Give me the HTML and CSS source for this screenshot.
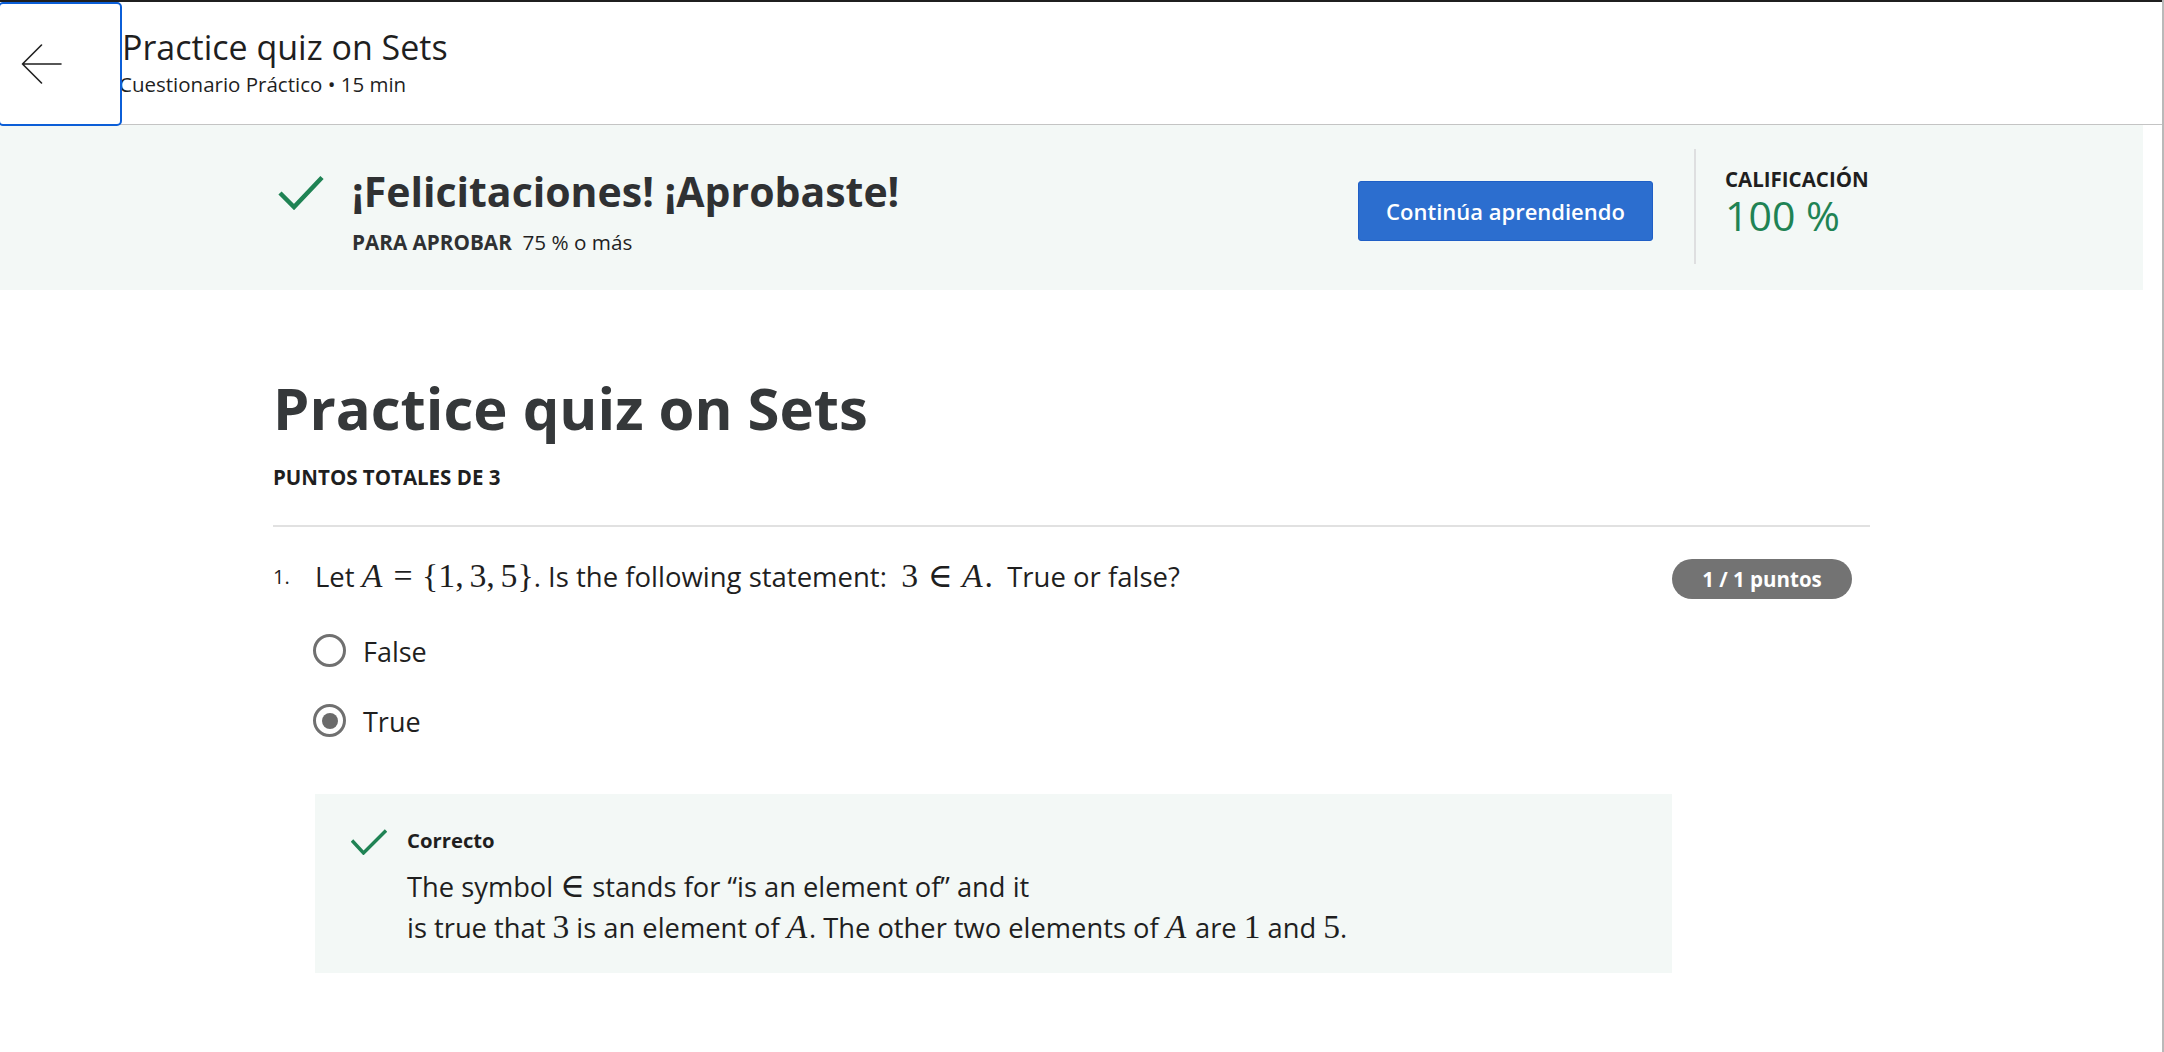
FILE: index.html
```html
<!DOCTYPE html>
<html lang="es">
<head>
<meta charset="utf-8">
<title>Practice quiz on Sets</title>
<link rel="stylesheet" href="styles.css">
</head>
<body>
<div class="app">
  <header class="topbar">
    <button class="back" aria-label="Volver">
      <svg width="41" height="40" viewBox="0 0 41 40" fill="none" stroke="#1f1f1f" stroke-width="1.6" stroke-linecap="round" stroke-linejoin="round">
        <path d="M40 20 H1.5 M20.5 1 L1.5 20 L20.5 39"/>
      </svg>
    </button>
    <div class="topbar-text">
      <div class="topbar-title">Practice quiz on Sets</div>
      <div class="topbar-sub">Cuestionario Práctico • 15 min</div>
    </div>
  </header>

  <section class="result-band">
    <div class="band-inner">
      <svg class="band-check" width="46" height="35" viewBox="0 0 46 35" fill="none" stroke="#1f8354" stroke-width="4.5" stroke-linecap="butt" stroke-linejoin="miter">
        <path d="M2 18 L16 32 L44 2.5"/>
      </svg>
      <div class="band-text">
        <h2 class="band-title">¡Felicitaciones! ¡Aprobaste!</h2>
        <p class="band-pass"><strong>PARA APROBAR</strong>&nbsp; 75 % o más</p>
      </div>
      <button class="continue">Continúa aprendiendo</button>
      <div class="band-divider"></div>
      <div class="grade">
        <div class="grade-label">CALIFICACIÓN</div>
        <div class="grade-value">100 %</div>
      </div>
    </div>
  </section>

  <div class="page">
    <main class="content">
      <h1 class="quiz-title">Practice quiz on Sets</h1>
      <div class="points-total">PUNTOS TOTALES DE 3</div>
      <hr class="rule">

      <div class="question">
        <div class="q-num">1.</div>
        <div class="q-body">
          <div class="q-text">Let <span class="math"><span class="mi">A</span><span class="mo rel">=</span><span class="mo">{</span><span class="mn">1</span><span class="mo punct">,</span><span class="mn">3</span><span class="mo punct">,</span><span class="mn">5</span><span class="mo">}</span></span>. Is the following statement: &nbsp;<span class="math"><span class="mn">3</span><span class="mo rel">∈</span><span class="mi">A</span><span class="mo">.</span></span>&nbsp; True or false?</div>

          <div class="options">
            <label class="option">
              <span class="radio"></span>
              <span class="option-label">False</span>
            </label>
            <label class="option">
              <span class="radio checked"></span>
              <span class="option-label">True</span>
            </label>
          </div>

          <div class="feedback">
            <svg class="fb-check" width="36" height="26" viewBox="0 0 36 26" fill="none" stroke="#1f8354" stroke-width="3.4" stroke-linecap="butt" stroke-linejoin="miter">
              <path d="M1 11.5 L12.5 24 L35 1.5"/>
            </svg>
            <div class="fb-text">
              <div class="fb-title">Correcto</div>
              <div class="fb-body">The symbol <span class="math"><span class="mo">∈</span></span> stands for “is an element of” and it<br>is true that <span class="math"><span class="mn">3</span></span> is an element of <span class="math"><span class="mi">A</span></span>. The other two elements of <span class="math"><span class="mi">A</span></span> are <span class="math"><span class="mn">1</span></span> and <span class="math"><span class="mn">5</span></span>.</div>
            </div>
          </div>
        </div>
        <div class="q-points"><span class="badge">1 / 1 puntos</span></div>
      </div>
    </main>
  </div>
</div>
</body>
</html>
```

FILE: styles.css
```css
* { box-sizing: border-box; }

html, body {
  margin: 0;
  padding: 0;
  background: #ffffff;
}

body {
  font-family: "Open Sans", "Noto Sans", "Liberation Sans", sans-serif;
  color: #1f1f1f;
}

.app {
  width: 2164px;
  min-height: 1052px;
  border-right: 2px solid #b9b9b9;
}

/* ---------- top bar ---------- */
.topbar {
  display: flex;
  align-items: stretch;
  height: 125px;
  border-top: 2px solid #1f1f1f;
  border-bottom: 1px solid #c4c4c4;
}

.back {
  position: relative;
  z-index: 2;
  flex: 0 0 auto;
  width: 124px;
  height: 124px;
  margin-left: -2px;
  padding: 0 0 0 2px;
  background: #ffffff;
  border: 2px solid #0b5ed7;
  border-radius: 5px;
  display: flex;
  align-items: center;
  justify-content: center;
  cursor: pointer;
}

.back svg { margin-left: -39px; margin-top: -1px; }

.topbar-text {
  margin-left: 0;
  padding-top: 24px;
}

.topbar-title {
  font-size: 34px;
  line-height: 42px;
  color: #1f1f1f;
}

.topbar-sub {
  margin-top: 2px;
  margin-left: -3px;
  font-size: 20.5px;
  line-height: 28px;
  color: #1f1f1f;
}

/* ---------- result band ---------- */
.result-band {
  margin-right: 19px;
  height: 165px;
  background: #f3f8f6;
}

.band-inner {
  width: 1597px;
  margin: 0 auto;
  height: 100%;
  display: flex;
  align-items: flex-start;
}

.band-check {
  flex: 0 0 auto;
  margin-left: 5px;
  margin-top: 50px;
}

.band-text {
  flex: 1 1 auto;
  margin-left: 28px;
  padding-top: 42px;
}

.band-title {
  margin: 0;
  font-size: 41px;
  line-height: 48px;
  font-weight: 700;
  color: #2f3133;
}

.band-pass {
  margin: 15px 0 0;
  font-size: 20.7px;
  line-height: 24px;
  color: #1f1f1f;
}

.band-pass strong {
  font-weight: 700;
  color: #2f3133;
}

.continue {
  flex: 0 0 auto;
  margin-top: 56px;
  width: 295px;
  height: 60px;
  background: #2c6ecf;
  border: 1px solid #1f5fc6;
  border-radius: 3px;
  color: #ffffff;
  font-family: "Open Sans", "Noto Sans", sans-serif;
  font-size: 22px;
  font-weight: 600;
  padding: 0;
  cursor: pointer;
}

.band-divider {
  flex: 0 0 auto;
  margin-left: 41px;
  margin-top: 24px;
  width: 2px;
  height: 115px;
  background: #dedfe0;
}

.grade {
  flex: 0 0 auto;
  margin-left: 29px;
  width: 145px;
  padding-top: 40px;
}

.grade-label {
  font-size: 20.5px;
  line-height: 28px;
  font-weight: 700;
  color: #1f1f1f;
  white-space: nowrap;
}

.grade-value {
  font-size: 41px;
  line-height: 44px;
  color: #1f8354;
}

/* ---------- main content ---------- */
.page {
  margin-right: 19px;
}

.content {
  width: 1597px;
  margin: 0 auto;
}

.quiz-title {
  margin: 83px 0 0;
  font-size: 58px;
  line-height: 70px;
  font-weight: 700;
  color: #35383a;
}

.points-total {
  margin-top: 22px;
  font-size: 20.5px;
  line-height: 24px;
  font-weight: 700;
  color: #1f1f1f;
}

.rule {
  margin: 36px 0 0;
  height: 0;
  border: 0;
  border-top: 2px solid #e1e1e1;
}

.question {
  display: flex;
  align-items: flex-start;
  margin-top: 32px;
}

.q-num {
  flex: 0 0 42px;
  font-size: 20px;
  line-height: 36px;
  color: #1f1f1f;
}

.q-body {
  flex: 0 0 1357px;
}

.q-text {
  font-size: 27.5px;
  line-height: 36px;
  color: #1f1f1f;
}

.math {
  font-family: "Liberation Serif", "DejaVu Serif", serif;
  font-size: 1.23em;
  line-height: 0;
  white-space: nowrap;
}

.mi { font-style: italic; margin-right: 0.05em; }
.mo.rel { margin: 0 0.28em; }
.mo.punct { margin-right: 0.17em; }

.options {
  margin-top: 40px;
  margin-left: -2px;
  display: flex;
  flex-direction: column;
  gap: 36px;
}

.option {
  display: flex;
  align-items: flex-start;
  height: 34px;
  cursor: pointer;
}

.radio {
  flex: 0 0 auto;
  width: 33px;
  height: 33px;
  margin-top: -1px;
  border: 3px solid #707070;
  border-radius: 50%;
  background: #ffffff;
  position: relative;
}

.radio.checked::after {
  content: "";
  position: absolute;
  left: 5.5px;
  top: 5.5px;
  width: 16px;
  height: 16px;
  border-radius: 50%;
  background: #6b6b6b;
}

.option-label {
  margin-left: 17px;
  font-size: 27px;
  line-height: 34px;
  color: #1f1f1f;
}

.feedback {
  margin-top: 55px;
  width: 1357px;
  background: #f3f8f6;
  padding: 33px 0 25px 36px;
  display: flex;
  align-items: flex-start;
}

.fb-check {
  flex: 0 0 auto;
  margin-top: 2px;
}

.fb-text {
  margin-left: 20px;
}

.fb-title {
  font-size: 20.3px;
  line-height: 26px;
  font-weight: 700;
  color: #1f1f1f;
}

.fb-body {
  margin-top: 13px;
  font-size: 27.3px;
  line-height: 41px;
  color: #1f1f1f;
}

.q-points {
  flex: 0 0 auto;
}

.badge {
  display: inline-flex;
  align-items: center;
  justify-content: center;
  width: 180px;
  height: 40px;
  border-radius: 20px;
  background: #737373;
  color: #ffffff;
  font-size: 20.5px;
  font-weight: 700;
}
```
